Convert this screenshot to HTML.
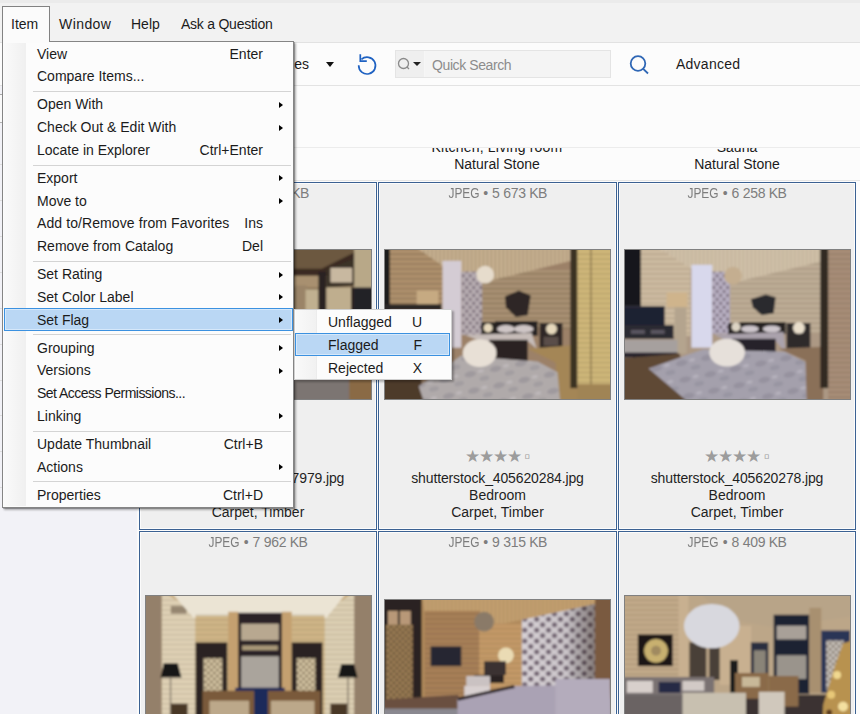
<!DOCTYPE html>
<html><head><meta charset="utf-8">
<style>
*{box-sizing:border-box;margin:0;padding:0}
html,body{width:860px;height:714px;overflow:hidden;background:#fcfcfc;font-family:"Liberation Sans",sans-serif;font-size:14px;color:#1b1b1b}
.abs{position:absolute}
#menubar{left:0;top:0;width:860px;height:42px;background:#f2f2f2;border-top:3px solid #ebebeb}
#menubar .mi{position:absolute;top:13px;white-space:nowrap}
#mbline{left:0;top:42px;width:860px;height:1px;background:#e2e2e2}
#toolbar{left:0;top:43px;width:860px;height:43px;background:#fcfcfc;border-bottom:1px solid #e3e3e3}
#leftpanel{left:0;top:86px;width:138px;height:628px;background:#f2f2f7;border-right:1px solid #fafafa}
.t{position:absolute;white-space:nowrap}
.card{position:absolute;width:238px;height:348px;background:#efefef;border:1px solid #3b6192;box-shadow:inset 1px 1px 0 #fbfbfb, inset -1px -1px 0 #fbfbfb}
.card .meta{position:absolute;left:0;right:0;top:1.6px;text-align:center;color:#7d7d7d;font-size:14px}
.card .meta .j{display:inline-block;transform:scaleX(0.85);transform-origin:100% 50%;margin-left:-5.2px;margin-right:0px}.card .meta .k{letter-spacing:-0.5px;margin-left:-0.5px}.card .meta .d{letter-spacing:-0.25px}
.card .photo{position:absolute;left:5px;top:66px;width:227px;height:151px;background:#7a6448;border:1px solid #808080;overflow:hidden}
.card .stars{position:absolute;left:-1px;right:0;top:263px;text-align:center;color:#9c9c9c;font-size:17px;letter-spacing:-1px}
.card .l1,.card .l2,.card .l3{position:absolute;left:0;right:0;text-align:center;color:#1f1f1f}
.card .l1{top:287px;letter-spacing:-0.13px}.card .l2{top:304px}.card .l3{top:321px}
#hdrclip{left:139px;top:147px;width:721px;height:33px;overflow:hidden;background:#fcfcfc;border-top:1px solid #ececec}
#hdrline{left:139px;top:180px;width:721px;height:1px;background:#e6e6e6}
/* menu */
#itemtab{left:2px;top:6px;width:48px;height:36px;background:#fbfbfb;border:1px solid #828282;border-bottom:none}
#menu{left:2px;top:41px;width:292px;height:467px;background:#fcfcfc;border:1px solid #858585;box-shadow:1px 1px 0 rgba(0,0,0,0.22),2px 2px 2px rgba(0,0,0,0.3)}
#menu .gut{position:absolute;left:1px;top:1px;width:22px;bottom:1px;background:linear-gradient(90deg,#fafafa 0%,#f6f6f6 40%,#f0f0f0 100%);border-right:1px solid #f0f0f0}
.row{position:absolute;left:0;right:0;height:22.8px;line-height:22.8px}
.row .lab{position:absolute;left:34px;top:0px}
.row .sc{position:absolute;right:30px;top:0px}
.row .ar{position:absolute;right:10px;top:8.6px;width:0;height:0;border-left:4px solid #000;border-top:3.7px solid transparent;border-bottom:3.7px solid transparent}
.sep{position:absolute;left:30px;right:2px;height:1px;background:#d4d4d4}
.hl{background:#bad7f4;border:1px solid #3b91e0;box-shadow:inset 1px 1px 0 #d6e8fa,inset -1px -1px 0 #d6e8fa}
#submenu{left:294px;top:309px;width:158px;height:71px;background:#fcfcfc;border:1px solid #cfcfcf;box-shadow:2px 2px 2px rgba(0,0,0,0.28)}
#submenu .gut{position:absolute;left:1px;top:0;width:21px;bottom:0;background:linear-gradient(90deg,#f9f9f9,#f1f1f1);border-right:1px solid #ececec}
.card .stars .sq{position:relative;top:-0.5px}
</style></head><body><svg width="0" height="0" style="position:absolute"><defs>
<filter id="bl" x="-5%" y="-5%" width="110%" height="110%"><feGaussianBlur stdDeviation="1.2"/></filter>
<filter id="bl2" x="-5%" y="-5%" width="110%" height="110%"><feGaussianBlur stdDeviation="0.6"/></filter>
<pattern id="plank" width="8" height="5" patternUnits="userSpaceOnUse"><rect y="3.6" width="8" height="1.2" fill="#3a2a1a" opacity="0.35"/></pattern>
<pattern id="plankv" width="4" height="8" patternUnits="userSpaceOnUse"><rect x="2.8" width="1.2" height="8" fill="#3a2a1a" opacity="0.25"/></pattern>
<pattern id="rug" width="26" height="17" patternUnits="userSpaceOnUse" patternTransform="rotate(-12)"><ellipse cx="6" cy="5" rx="6" ry="3" fill="#6a6878" opacity="0.25"/><ellipse cx="19" cy="12" rx="5" ry="2.5" fill="#6a6878" opacity="0.2"/><ellipse cx="17" cy="4" rx="3" ry="1.5" fill="#f0ecf2" opacity="0.25"/></pattern>
<pattern id="hearts" width="7" height="8" patternUnits="userSpaceOnUse"><circle cx="2" cy="2" r="1.6" fill="#5a4a5a" opacity="0.7"/><circle cx="5.5" cy="6" r="1.6" fill="#5a4a5a" opacity="0.7"/></pattern>
<pattern id="lattice" width="6" height="6" patternUnits="userSpaceOnUse"><path d="M0 3 L3 0 L6 3 L3 6 Z" fill="none" stroke="#4a3a28" stroke-width="0.9" opacity="0.7"/></pattern>
<pattern id="hearts2" width="12" height="11" patternUnits="userSpaceOnUse"><circle cx="3" cy="3" r="2.6" fill="#5a4a5a" opacity="0.8"/><circle cx="9" cy="8.5" r="2.6" fill="#5a4a5a" opacity="0.8"/></pattern>
<linearGradient id="curtdark" x1="0" x2="1" y1="0" y2="0"><stop offset="0" stop-color="#000" stop-opacity="0"/><stop offset="0.6" stop-color="#000" stop-opacity="0.05"/><stop offset="1" stop-color="#2a1a10" stop-opacity="0.45"/></linearGradient>
</defs></svg>
<div id="menubar" class="abs">
  <div class="mi" style="left:59px;letter-spacing:0.43px">Window</div>
  <div class="mi" style="left:131px">Help</div>
  <div class="mi" style="left:181px;letter-spacing:-0.24px">Ask a Question</div>
</div>
<div id="mbline" class="abs"></div>
<div id="toolbar" class="abs">
  <div class="t" style="right:551px;top:13px">Properties</div>
  <div class="abs" style="left:325.5px;top:19px;width:0;height:0;border-top:5px solid #111;border-left:4.5px solid transparent;border-right:4.5px solid transparent"></div>
  <svg class="abs" style="left:352px;top:7px" width="30" height="30" viewBox="0 0 30 30"><path d="M6.7 15.3 A8.4 8.4 0 1 0 9.4 9.4" fill="none" stroke="#1f62c2" stroke-width="1.7"/><path d="M8.3 4.2 L8.3 11.2 L14.8 11.2" fill="none" stroke="#1f62c2" stroke-width="1.7"/></svg>
  <div class="abs" style="left:395px;top:7px;width:216px;height:28px;background:#f4f4f4;border:1px solid #e4e4e4"></div>
  <div class="abs" style="left:396px;top:8px;width:29px;height:26px;background:#efefef;border-right:1px solid #f6f6f6"></div>
  <svg class="abs" style="left:396px;top:13px" width="28" height="16" viewBox="0 0 28 16"><circle cx="7.5" cy="7.5" r="5" fill="none" stroke="#8a8a8a" stroke-width="1.3"/><path d="M11 11 L13 13" stroke="#8a8a8a" stroke-width="1.3"/><path d="M17 6 L25 6 L21 10 Z" fill="#222"/></svg>
  <div class="t" style="left:432px;top:13.5px;color:#8c8c8c;letter-spacing:-0.4px">Quick Search</div>
  <svg class="abs" style="left:627px;top:10px" width="24" height="24" viewBox="0 0 24 24"><circle cx="11" cy="10.5" r="7.3" fill="none" stroke="#2f67b5" stroke-width="1.8"/><path d="M16.2 15.8 L21 20.5" stroke="#2f67b5" stroke-width="1.8"/></svg>
  <div class="t" style="left:676px;top:13px;letter-spacing:0.25px">Advanced</div>
</div>
<div id="leftpanel" class="abs"></div>
<div class="abs" style="left:0;top:94px;width:2px;height:29px;background:#fafafa;border-top:1px solid #a8a8a8;border-bottom:1px solid #b4b4b4"></div><div class="abs" style="left:0;top:164px;width:2px;height:1px;background:#dedede"></div><div class="abs" style="left:0;top:200px;width:2px;height:1px;background:#dedede"></div><div class="abs" style="left:0;top:236px;width:2px;height:1px;background:#dedede"></div><div class="abs" style="left:0;top:272px;width:2px;height:1px;background:#dedede"></div><div class="abs" style="left:0;top:308px;width:2px;height:1px;background:#dedede"></div><div class="abs" style="left:0;top:344px;width:2px;height:1px;background:#dedede"></div><div class="abs" style="left:0;top:380px;width:2px;height:1px;background:#dedede"></div><div class="abs" style="left:0;top:415px;width:2px;height:1px;background:#dedede"></div><div class="abs" style="left:0;top:451px;width:2px;height:1px;background:#dedede"></div><div class="abs" style="left:0;top:487px;width:2px;height:1px;background:#dedede"></div>
<div id="hdrclip" class="abs">
  <div class="t" style="left:239px;width:238px;text-align:center;top:-9px;letter-spacing:0.2px">Kitchen, Living room</div>
  <div class="t" style="left:479px;width:238px;text-align:center;top:-9px">Sauna</div>
  <div class="t" style="left:239px;width:238px;text-align:center;top:8px">Natural Stone</div>
  <div class="t" style="left:479px;width:238px;text-align:center;top:8px">Natural Stone</div>
</div>
<div id="hdrline" class="abs"></div>

<div class="card" style="left:139px;top:182px"><div class="meta" style="left:3px"><span class="j">JPEG</span> • <span class="d">6 012</span> <span class="k">KB</span></div><div class="photo" id="p1"><svg width="100%" height="100%" viewBox="0 0 227 151" preserveAspectRatio="none" style="display:block"><rect width="227" height="151" fill="#8a7458"/><g filter="url(#bl)">
<rect x="-5" y="-5" width="240" height="165" fill="#8a7458"/>
<rect x="140" y="-5" width="72" height="25" fill="#6c5840"/>
<polygon points="140,19 177,19 211,2 212,10 180,27 140,27" fill="#3a2a20"/>
<rect x="140" y="26" width="40" height="12" fill="#a89070"/>
<rect x="150" y="36" width="12" height="30" fill="#9a8468"/>
<rect x="161" y="40" width="13" height="26" fill="#c0b090"/>
<rect x="174" y="22" width="8" height="44" fill="#2a2420"/>
<polygon points="182,20 211,8 211,36 182,38" fill="#3a3028"/>
<rect x="186" y="18" width="22" height="15" fill="#c8b8a0"/>
<rect x="182" y="38" width="25" height="28" fill="#bfae8e"/>
<rect x="207" y="38" width="4" height="28" fill="#2a2420"/>
<rect x="210" y="-5" width="22" height="44" fill="#b8a888"/>
<rect x="210" y="38" width="22" height="28" fill="#222228"/>
<rect x="-5" y="118" width="240" height="40" fill="#7c7472"/>
<rect x="205" y="118" width="27" height="40" fill="#8a6a45"/>
</g></svg></div><div class="stars">★★★★ <span class="sq">▫</span></div><div class="l1">shutterstock_405627979.jpg</div><div class="l2">Bedroom</div><div class="l3">Carpet, Timber</div></div>
<div class="card" style="left:378px;top:182px;width:239px"><div class="meta"><span class="j">JPEG</span> • <span class="d">5 673</span> <span class="k">KB</span></div><div class="photo" id="p2"><svg width="100%" height="100%" viewBox="0 0 227 151" preserveAspectRatio="none" style="display:block"><rect width="227" height="151" fill="#9c8168"/><g filter="url(#bl)">
<rect x="-5" y="-5" width="240" height="165" fill="#9c8168"/>
<rect x="-5" y="-5" width="64" height="66" fill="#b0926e"/>
<rect x="-5" y="-5" width="64" height="66" fill="url(#plank)"/>
<rect x="98" y="20" width="92" height="60" fill="#aa9274"/>
<rect x="98" y="20" width="92" height="60" fill="url(#plank)"/>
<polygon points="28,-5 192,-5 192,10 98,33 58,16" fill="#c9b292"/>
<polygon points="28,-5 192,-5 192,10 98,33 58,16" fill="url(#plankv)"/>
<rect x="-5" y="-5" width="10" height="70" fill="#1e1a1a"/>
<rect x="58" y="11" width="19" height="88" fill="#d4ccd4"/>
<rect x="77" y="22" width="21" height="64" fill="#b8aeb2"/><rect x="77" y="22" width="21" height="64" fill="url(#hearts)"/>
<circle cx="101" cy="25" r="9" fill="#e6dccc"/>
<polygon points="121,47 135,41 147,46 144,66 132,68 122,58" fill="#2e2826"/>
<rect x="32" y="41" width="22" height="14" fill="#c6aa82"/>
<rect x="-5" y="55" width="62" height="6" fill="#2c2828"/>
<rect x="97" y="73" width="15" height="13" fill="#2a2624"/>
<rect x="111" y="72" width="43" height="15" fill="#262222"/>
<ellipse cx="122" cy="80" rx="9" ry="4" fill="#cfc6c6"/>
<ellipse cx="140" cy="80" rx="10" ry="4" fill="#cfc6c6"/>
<rect x="156" y="74" width="23" height="27" fill="#2e2826"/>
<rect x="160" y="88" width="15" height="9" fill="#5a4e48"/>
<circle cx="104" cy="79" r="4.5" fill="#e6d8bc"/>
<circle cx="168" cy="80" r="5.5" fill="#e6d8bc"/>
<polygon points="80,86 148,84 153,100 145,93 104,95" fill="#c6bcb8"/>
<rect x="105" y="91" width="39" height="25" fill="#2a2424"/>
<polygon points="-5,120 36,126 40,156 -5,156" fill="#4e3a2a"/>
<polygon points="144,100 196,96 196,156 176,156 172,114" fill="#a48656"/>
<polygon points="34,138 77,107 154,113 174,124 177,156 40,156" fill="#b0aaaa"/><polygon points="34,138 77,107 154,113 174,124 177,156 40,156" fill="url(#rug)"/>
<ellipse cx="95.5" cy="104.5" rx="17" ry="14" fill="#e8e0d6"/>
<rect x="187" y="-5" width="8" height="145" fill="#3a3024"/>
<rect x="194" y="-5" width="38" height="142" fill="#d0b87a"/>
<rect x="194" y="-5" width="38" height="142" fill="url(#plank)" opacity="0.6"/>
<rect x="207" y="-5" width="1.5" height="142" fill="#5a4a30" opacity="0.5"/>
<rect x="194" y="136" width="38" height="25" fill="#a08454"/>
</g></svg></div><div class="stars">★★★★ <span class="sq">▫</span></div><div class="l1">shutterstock_405620284.jpg</div><div class="l2">Bedroom</div><div class="l3">Carpet, Timber</div></div>
<div class="card" style="left:618px;top:182px"><div class="meta"><span class="j">JPEG</span> • <span class="d">6 258</span> <span class="k">KB</span></div><div class="photo" id="p3"><svg width="100%" height="100%" viewBox="0 0 227 151" preserveAspectRatio="none" style="display:block"><rect width="227" height="151" fill="#ac9884"/><g filter="url(#bl)">
<rect x="-5" y="-5" width="240" height="165" fill="#ac9884"/>
<rect x="16" y="-5" width="50" height="92" fill="#cebca2"/>
<rect x="16" y="-5" width="50" height="92" fill="url(#plank)" opacity="0.6"/>
<rect x="105" y="12" width="93" height="72" fill="#bead96"/>
<rect x="105" y="12" width="93" height="72" fill="url(#plank)" opacity="0.6"/>
<polygon points="29,-5 198,-5 197,12 105.5,34 66,18.5" fill="#d2c2aa"/>
<polygon points="29,-5 198,-5 197,12 105.5,34 66,18.5" fill="url(#plankv)" opacity="0.6"/>
<rect x="-5" y="-5" width="21" height="62" fill="#18181e"/>
<rect x="-5" y="57" width="45" height="20" fill="#1e2030"/>
<rect x="-5" y="76" width="54" height="14" fill="#2c2a30"/>
<rect x="6" y="81" width="14" height="4" fill="#5a5660"/>
<rect x="26" y="81" width="14" height="4" fill="#5a5660"/>
<rect x="42" y="43" width="21" height="15" fill="#cfb48c"/>
<rect x="50" y="58" width="12" height="47" fill="#b4a48e"/>
<rect x="-5" y="91" width="58" height="14" fill="#a6a09e"/>
<rect x="-5" y="104" width="58" height="5" fill="#28242a"/>
<rect x="8" y="107" width="3" height="12" fill="#28242a"/>
<rect x="42" y="107" width="3" height="12" fill="#28242a"/>
<polygon points="-5,110 55,105 70,156 -5,156" fill="#5e4836"/>
<rect x="67" y="15" width="21" height="84" fill="#d8d8ec"/>
<rect x="88" y="22" width="18" height="63" fill="#b8b0c2"/><rect x="88" y="22" width="18" height="63" fill="url(#hearts)"/>
<circle cx="109" cy="26" r="9" fill="#c4ae90"/>
<polygon points="127,50 142,45 152,48 150,64 138,66 129,58" fill="#2c2a2e"/>
<rect x="104" y="74" width="13" height="14" fill="#2a2628"/>
<rect x="116" y="73" width="46" height="12" fill="#262224"/>
<ellipse cx="126" cy="80" rx="9" ry="3.5" fill="#cdc6cc"/>
<ellipse cx="148" cy="80" rx="9" ry="3.5" fill="#cdc6cc"/>
<rect x="163" y="74" width="24" height="26" fill="#2e2a2c"/>
<circle cx="112" cy="78" r="4.5" fill="#ddd4c4"/>
<circle cx="175.5" cy="79" r="6" fill="#eadfcc"/>
<polygon points="90,86 160,83 162,104 152,92 108,94" fill="#aaa2ac"/>
<rect x="108" y="90" width="44" height="26" fill="#28242a"/>
<polygon points="155,100 200,98 200,156 183,156 182,112" fill="#8a7058"/>
<polygon points="23.7,120 79,100.5 161,103 182,113.5 183.4,156 66,156" fill="#a4a0ac"/><polygon points="23.7,120 79,100.5 161,103 182,113.5 183.4,156 66,156" fill="url(#rug)"/>
<ellipse cx="103" cy="104" rx="18" ry="14" fill="#e6e0da"/>
<rect x="197" y="-5" width="9" height="145" fill="#322a24"/>
<rect x="205" y="-5" width="27" height="165" fill="#a88e78"/>
<rect x="205" y="-5" width="27" height="165" fill="url(#plank)" opacity="0.6"/>
</g></svg></div><div class="stars">★★★★ <span class="sq">▫</span></div><div class="l1">shutterstock_405620278.jpg</div><div class="l2">Bedroom</div><div class="l3">Carpet, Timber</div></div>

<div class="card" style="left:139px;top:531px"><div class="meta"><span class="j">JPEG</span> • <span class="d">7 962</span> <span class="k">KB</span></div><div class="photo" id="p4" style="top:63px;height:160px"><svg width="100%" height="100%" viewBox="0 0 227 160" preserveAspectRatio="none" style="display:block"><rect width="227" height="160" fill="#c6a878"/><g filter="url(#bl)">
<rect x="-5" y="-5" width="240" height="170" fill="#c6a878"/>
<rect x="-5" y="-5" width="21" height="170" fill="#94806a"/>
<polygon points="16,-5 50,16 50,165 16,165" fill="#e0d2b6"/>
<polygon points="16,-5 50,16 50,165 16,165" fill="url(#plank)" opacity="0.5"/>
<rect x="25" y="10" width="16" height="8" fill="#6a5a48" opacity="0.6"/>
<polygon points="212,-5 180,16 180,165 212,165" fill="#ddd0b4"/>
<polygon points="212,-5 180,16 180,165 212,165" fill="url(#plank)" opacity="0.5"/>
<rect x="210" y="-5" width="22" height="170" fill="#94806a"/>
<polygon points="24,-5 204,-5 182,22 48,22" fill="#ebe4d4"/>
<rect x="50" y="20" width="130" height="150" fill="#d0b688" />
<rect x="50" y="18" width="130" height="150" fill="url(#plank)" opacity="0.5"/>
<rect x="83" y="16" width="10" height="150" fill="#c4a070"/>
<rect x="137" y="16" width="10" height="150" fill="#c4a070"/>
<rect x="93" y="17" width="44" height="79" fill="#2a2228"/>
<rect x="96" y="28" width="38" height="17" fill="#b8a890"/>
<rect x="97" y="50" width="36" height="5" fill="#a89878"/>
<rect x="96" y="61" width="38" height="32" fill="#aaa49c"/>
<rect x="50" y="47" width="32" height="120" fill="#2a2420"/>
<rect x="58" y="63" width="19" height="60" fill="#d6c6a4"/><rect x="58" y="63" width="19" height="60" fill="url(#lattice)"/>
<rect x="147" y="47" width="31" height="120" fill="#2a2420"/>
<rect x="152" y="63" width="19" height="60" fill="#d6c6a4"/><rect x="152" y="63" width="19" height="60" fill="url(#lattice)"/>
<polygon points="14.6,82.5 18,68 32,68 35.8,82.5" fill="#121212"/>
<polygon points="193.6,82.5 197,69 210,69 213.5,82.5" fill="#121212"/>
<rect x="24" y="82" width="1.5" height="40" fill="#8a8070"/>
<rect x="203" y="82" width="1.5" height="40" fill="#8a8070"/>
<rect x="25" y="109" width="17" height="15" fill="#4a3828"/>
<rect x="186" y="109" width="17" height="15" fill="#4a3828"/>
<rect x="90" y="93" width="50" height="30" fill="#1e2a5a"/>
<rect x="57" y="96" width="52" height="30" fill="#7a5a3a"/>
<rect x="123" y="96" width="53" height="30" fill="#7a5a3a"/>
<rect x="64" y="106" width="40" height="20" fill="#bca88a"/>
<rect x="126" y="106" width="44" height="20" fill="#bca88a"/>
</g></svg></div></div>
<div class="card" style="left:378px;top:531px;width:239px"><div class="meta"><span class="j">JPEG</span> • <span class="d">9 315</span> <span class="k">KB</span></div><div class="photo" id="p5" style="top:67px;height:160px"><svg width="100%" height="100%" viewBox="0 0 227 160" preserveAspectRatio="none" style="display:block"><rect width="227" height="160" fill="#b08a5c"/><g filter="url(#bl)">
<rect x="-5" y="-5" width="240" height="170" fill="#b08a5c"/>
<polygon points="37,-5 215,-5 204,16 138,20 95,30 40,12" fill="#c4a070"/>
<polygon points="37,-5 215,-5 204,16 138,20 95,30 40,12" fill="url(#plankv)" opacity="0.6"/>
<rect x="40" y="11" width="56" height="92" fill="#a88058"/>
<rect x="40" y="11" width="56" height="92" fill="url(#plank)" opacity="0.6"/>
<rect x="95" y="24" width="43" height="66" fill="#c49a68"/>
<rect x="95" y="24" width="43" height="66" fill="url(#plank)" opacity="0.5"/>
<circle cx="122" cy="56" r="8" fill="#eadbb4"/>
<rect x="100" y="62" width="22" height="14" fill="#3a3030"/>
<rect x="90" y="76" width="30" height="8" fill="#2c2424"/>
<rect x="-5" y="-5" width="42" height="170" fill="#2a2220"/>
<rect x="3" y="11" width="23" height="16" fill="#b89878"/>
<rect x="13" y="11" width="2" height="16" fill="#2a2220"/>
<rect x="1" y="25" width="27" height="76" fill="#9a7c54"/><rect x="1" y="25" width="27" height="76" fill="url(#lattice)"/>
<rect x="46" y="47" width="31" height="20" fill="#262832"/>
<circle cx="100" cy="22" r="10" fill="#8a7a68"/>
<polygon points="138,20 212,4 212,93 138,93" fill="#d6d0d4"/><polygon points="138,20 212,4 212,93 138,93" fill="url(#hearts2)"/><polygon points="138,20 212,4 212,93 138,93" fill="url(#curtdark)"/>
<rect x="212" y="-5" width="20" height="170" fill="#7a5a40"/>
<rect x="82" y="77" width="24" height="10" fill="#cac2c2"/><rect x="80" y="87" width="26" height="11" fill="#d8d0d0"/>
<polygon points="-5,101 74,96 74,165 -5,165" fill="#6a5040"/>
<rect x="-5" y="110" width="79" height="10" fill="#8a8890"/>
<polygon points="73,100 130,87 227,86 232,165 74,165" fill="#aaa2b4"/>
<polygon points="73,99 130,86 131,89 74,102" fill="#2a2428"/>
<rect x="172" y="80" width="55" height="40" fill="#b4acbc"/>
</g></svg></div></div>
<div class="card" style="left:618px;top:531px"><div class="meta"><span class="j">JPEG</span> • <span class="d">8 409</span> <span class="k">KB</span></div><div class="photo" id="p6" style="top:63px;height:160px"><svg width="100%" height="100%" viewBox="0 0 227 160" preserveAspectRatio="none" style="display:block"><rect width="227" height="160" fill="#bca688"/><g filter="url(#bl)">
<rect x="-5" y="-5" width="240" height="170" fill="#bca688"/>
<rect x="-5" y="-5" width="64" height="90" fill="#c2aa8a"/>
<rect x="-5" y="-5" width="64" height="90" fill="url(#plank)" opacity="0.5"/>
<polygon points="74,-5 232,-5 232,20 150,32 100,22" fill="#b8a488"/>
<rect x="54" y="-5" width="10" height="90" fill="#c8b090"/>
<rect x="95.5" y="30" width="32" height="60" fill="#c8b090"/>
<rect x="13" y="39" width="35" height="32" fill="#1a1616"/>
<circle cx="31.3" cy="55.5" r="12" fill="#c8b070"/>
<circle cx="31.3" cy="55.5" r="5" fill="#a08a60"/>
<rect x="65" y="47" width="17" height="38" fill="#4a4038"/>
<rect x="85" y="47" width="10.5" height="38" fill="#4a4038"/>
<rect x="127" y="47" width="17.6" height="36" fill="#2a2e40"/>
<rect x="130" y="55" width="12" height="26" fill="#8a8478"/>
<rect x="150" y="19" width="36" height="80" fill="#1e2232"/>
<rect x="153" y="30" width="30" height="14" fill="#a8a098"/>
<rect x="153" y="60" width="30" height="24" fill="#9a948c"/>
<rect x="186" y="12" width="12" height="86" fill="#a89070"/>
<rect x="198" y="35" width="29" height="63" fill="#2a3456"/>
<rect x="203" y="45" width="18" height="50" fill="#c8c2bc"/><rect x="203" y="45" width="18" height="50" fill="url(#lattice)"/>
<ellipse cx="87.5" cy="30.5" rx="28" ry="22.5" fill="#d8d8de"/>
<rect x="106" y="65" width="8" height="33" fill="#1c1c1c"/>
<rect x="-5" y="82" width="95" height="45" fill="#7a7272"/>
<rect x="2" y="86" width="26" height="12" fill="#d8d0cc"/>
<rect x="34" y="87" width="22" height="11" fill="#262a44"/>
<rect x="58" y="86" width="22" height="10" fill="#d2cac6"/>
<rect x="-5" y="100" width="95" height="30" fill="#6a6464"/>
<rect x="90" y="100" width="140" height="30" fill="#3a3030"/>
<rect x="111" y="78" width="34" height="26" fill="#8a6a48"/>
<rect x="145" y="81" width="30" height="31" fill="#8a6a48"/>
<rect x="118" y="82" width="18" height="10" fill="#c8b898"/>
<rect x="58" y="98" width="64" height="30" fill="#c8c0b0"/>
<rect x="135" y="97" width="26" height="30" fill="#d0c8bc"/>
<polygon points="220,48 232,44 232,165 198,165 200,110 212,70" fill="#b89250"/><circle cx="214" cy="80" r="4" fill="#f0d890"/><circle cx="208" cy="100" r="4" fill="#e8c878"/><circle cx="220" cy="112" r="5" fill="#f4e0a0"/><circle cx="206" cy="118" r="3" fill="#5a3a20"/>
</g></svg></div></div>

<div id="itemtab" class="abs"><div class="t" style="left:8px;top:9px">Item</div></div>
<div id="menu" class="abs">
  <div class="gut"></div>
  <div class="row" style="top:0.5px"><span class="lab">View</span><span class="sc">Enter</span></div>
<div class="row" style="top:23.3px"><span class="lab">Compare Items...</span></div>
<div class="sep" style="top:49.0px"></div>
<div class="row" style="top:51.2px"><span class="lab">Open With</span><span class="ar"></span></div>
<div class="row" style="top:74.0px"><span class="lab">Check Out &amp; Edit With</span><span class="ar"></span></div>
<div class="row" style="top:96.8px"><span class="lab">Locate in Explorer</span><span class="sc">Ctrl+Enter</span></div>
<div class="sep" style="top:122.6px"></div>
<div class="row" style="top:124.7px"><span class="lab">Export</span><span class="ar"></span></div>
<div class="row" style="top:147.5px"><span class="lab">Move to</span><span class="ar"></span></div>
<div class="row" style="top:170.3px"><span class="lab" style="letter-spacing:0.09px">Add to/Remove from Favorites</span><span class="sc">Ins</span></div>
<div class="row" style="top:193.1px"><span class="lab">Remove from Catalog</span><span class="sc">Del</span></div>
<div class="sep" style="top:218.9px"></div>
<div class="row" style="top:221.0px"><span class="lab">Set Rating</span><span class="ar"></span></div>
<div class="row" style="top:243.8px"><span class="lab">Set Color Label</span><span class="ar"></span></div>
<div class="hl" style="position:absolute;left:1px;top:266px;width:289px;height:23px"></div><div class="row" style="top:266.6px"><span class="lab">Set Flag</span><span class="ar"></span></div>
<div class="sep" style="top:292.4px"></div>
<div class="row" style="top:294.5px"><span class="lab">Grouping</span><span class="ar"></span></div>
<div class="row" style="top:317.3px"><span class="lab">Versions</span><span class="ar"></span></div>
<div class="row" style="top:340.1px"><span class="lab" style="letter-spacing:-0.52px">Set Access Permissions...</span></div>
<div class="row" style="top:362.9px"><span class="lab">Linking</span><span class="ar"></span></div>
<div class="sep" style="top:388.7px"></div>
<div class="row" style="top:390.8px"><span class="lab">Update Thumbnail</span><span class="sc">Ctrl+B</span></div>
<div class="row" style="top:413.6px"><span class="lab">Actions</span><span class="ar"></span></div>
<div class="sep" style="top:439.4px"></div>
<div class="row" style="top:441.5px"><span class="lab">Properties</span><span class="sc">Ctrl+D</span></div>

</div>
<div class="abs" style="left:3px;top:41px;width:46px;height:2px;background:#fbfbfb"></div>
<div id="submenu" class="abs">
  <div class="gut"></div>
  <div class="row" style="top:1px"><span class="lab" style="left:33px">Unflagged</span><span class="sc" style="right:29px">U</span></div>
  <div class="hl" style="position:absolute;left:0px;top:23px;width:155px;height:23px"></div><div class="row" style="top:23.8px"><span class="lab" style="left:33px">Flagged</span><span class="sc" style="right:29px">F</span></div>
  <div class="row" style="top:46.6px"><span class="lab" style="left:33px">Rejected</span><span class="sc" style="right:29px">X</span></div>
</div>
</body></html>
